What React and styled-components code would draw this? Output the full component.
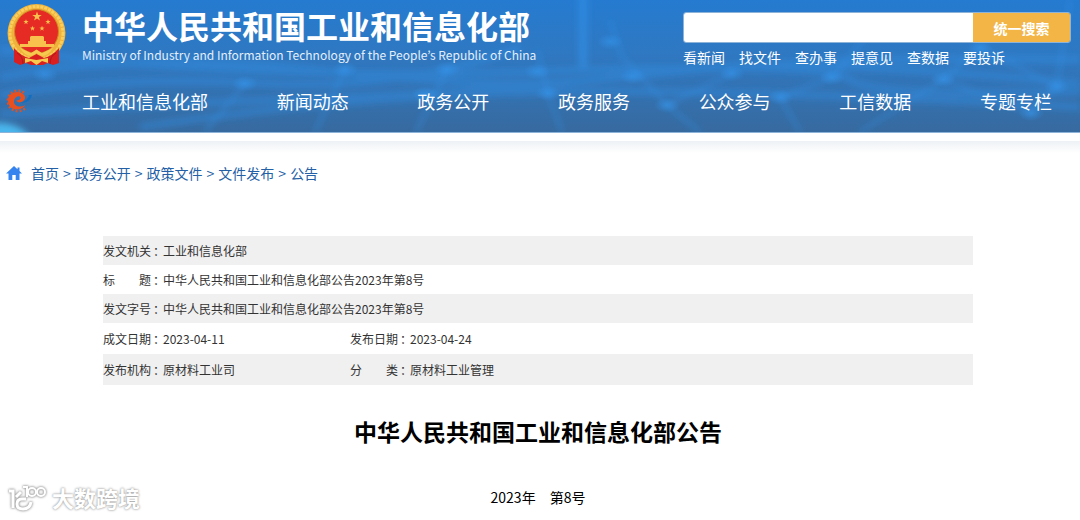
import React from 'react';
import styled, { createGlobalStyle } from 'styled-components';

const GlobalStyle = createGlobalStyle`
  * {
    box-sizing: border-box;
  }

  body {
    margin: 0;
    background: #fff;
    color: #333;
    font-family: 'Noto Sans CJK SC', sans-serif;
  }

  a {
    color: inherit;
    text-decoration: none;
  }
`;

const Page = styled.div`
  position: relative;
  min-height: 100vh;
`;

const Header = styled.header`
  position: relative;
  overflow: hidden;
  color: #fff;
  background: linear-gradient(#257bd0 0%, #2f78c2 40%, #3470ae 75%, #376a9f 100%);
  border-bottom: 1px solid #8db4d8;
`;

const Backdrop = styled.svg`
  position: absolute;
  top: 0;
  left: 0;
  width: 100%;
  height: 100%;
`;

const HeaderTop = styled.div`
  position: relative;
  display: flex;
  justify-content: space-between;
  padding: 4px 9px 0 7px;
`;

const Brand = styled.a`
  display: flex;
  gap: 15px;
`;

const Emblem = styled.svg`
  width: 60px;
  height: 64px;
`;

const BrandText = styled.div`
  display: flex;
  flex-direction: column;
`;

const BrandName = styled.span`
  font-size: 32px;
  line-height: 42px;
  font-weight: 700;
`;

const BrandSub = styled.span`
  font-family: 'Noto Sans CJK KR', sans-serif;
  font-size: 12px;
  line-height: 18px;
  color: #e3effb;
`;

const SearchArea = styled.div`
  width: 388px;
  padding-top: 8px;
`;

const SearchForm = styled.form`
  display: flex;
  height: 31px;
  border: 1px solid #8db4d8;
  border-radius: 3px;
  overflow: hidden;
`;

const SearchInput = styled.input`
  flex: 1;
  min-width: 0;
  border: 0;
  padding: 0 8px;
  background: #fff;
  outline: none;
`;

const SearchButton = styled.button`
  width: 97px;
  border: 0;
  padding: 0;
  background: #f2b546;
  color: #fff;
  font-family: inherit;
  font-size: 14px;
  font-weight: 700;
  cursor: pointer;
`;

const QuickLinks = styled.div`
  display: flex;
  gap: 14px;
  font-size: 14px;
  line-height: 28px;
`;

const Nav = styled.nav`
  position: relative;
  display: flex;
  align-items: center;
  padding: 14px 28px 15px 5px;
`;

const NavLogo = styled.svg`
  width: 28px;
  height: 24px;
  margin-right: 49px;
`;

const NavList = styled.div`
  flex: 1;
  display: flex;
  justify-content: space-between;
  font-size: 18px;
  line-height: 32px;
`;

const HeaderShadow = styled.div`
  height: 12px;
  margin-top: 8px;
  background: linear-gradient(#edf1f5, #fff);
`;

const Breadcrumb = styled.nav`
  display: flex;
  align-items: center;
  gap: 4px;
  padding: 8px 6px;
  font-size: 14px;
  line-height: 24px;
  color: #2360a5;
`;

const HomeIcon = styled.svg`
  width: 16px;
  height: 14px;
  margin-right: 5px;
`;

const Content = styled.main`
  padding: 43px 107px 0 103px;
`;

const InfoTable = styled.table`
  width: 100%;
  table-layout: fixed;
  border-collapse: collapse;
  font-size: 12px;
`;

const InfoRow = styled.tr`
  height: ${({ $tall }) => ($tall ? '31px' : '29px')};
  background: ${({ $shaded }) => ($shaded ? '#f0f0f0' : '#fff')};
`;

const LabelCell = styled.th`
  padding: 0;
  font-weight: 400;
  text-align: left;
  white-space: nowrap;
`;

const ValueCell = styled.td`
  padding: 0;
`;

const Label = styled.span`
  display: flex;
  gap: 2px;
`;

const LabelText = styled.span`
  flex: none;
  display: flex;
  justify-content: space-between;
  width: 48px;
`;

const Title = styled.h1`
  margin: 28px 0 0;
  font-size: 23px;
  line-height: 36px;
  font-weight: 700;
  text-align: center;
  color: #000;
`;

const IssueNo = styled.p`
  margin: 36px 0 0;
  font-size: 14px;
  line-height: 24px;
  text-align: center;
  color: #000;
`;

const Watermark = styled.div`
  position: absolute;
  left: 7px;
  bottom: 6px;
  display: flex;
  align-items: flex-start;
  gap: 3px;
  font-size: 22px;
  line-height: 30px;
  font-weight: 700;
  color: #fff;
  text-shadow: 0 0 2px #999, 0 0 3px #bbb;
`;

const WatermarkLogo = styled.svg`
  width: 42px;
  height: 32px;
  filter: drop-shadow(0 0 1px #999) drop-shadow(0 0 1px #bbb);
`;

const quickLinks = ['看新闻', '找文件', '查办事', '提意见', '查数据', '要投诉'];
const navItems = ['工业和信息化部', '新闻动态', '政务公开', '政务服务', '公众参与', '工信数据', '专题专栏'];
const crumbs = ['首页', '政务公开', '政策文件', '文件发布', '公告'];

const infoRows = [
  { cells: [['发文机关', '工业和信息化部']] },
  { cells: [['标题', '中华人民共和国工业和信息化部公告2023年第8号']] },
  { cells: [['发文字号', '中华人民共和国工业和信息化部公告2023年第8号']] },
  { cells: [['成文日期', '2023-04-11'], ['发布日期', '2023-04-24']], tall: true },
  { cells: [['发布机构', '原材料工业司'], ['分类', '原材料工业管理']], tall: true },
];

const glows = [
  [345, 70], [447, 70], [537, 72], [633, 77], [548, 94], [667, 106], [832, 78],
  [943, 80], [1057, 87], [780, 98], [1031, 114], [425, 95], [732, 74], [245, 84],
  [610, 42], [980, 48], [45, 75],
];

const star = 'M0-5 1.2-1.6 4.8-1.5 1.9.6 2.9 4 0 2-2.9 4-1.9.6-4.8-1.5-1.2-1.6Z';

function HeaderBackdrop() {
  return (
    <Backdrop viewBox="0 0 1080 133" preserveAspectRatio="none" aria-hidden="true">
      <defs>
        <radialGradient id="glow">
          <stop offset="0" stopColor="#369bf4" stopOpacity="0.5" />
          <stop offset="1" stopColor="#369bf4" stopOpacity="0" />
        </radialGradient>
        <filter id="soft" x="-10%" y="-50%" width="120%" height="200%">
          <feGaussianBlur stdDeviation="3" />
        </filter>
      </defs>
      <g fill="none" stroke="#3291e8" filter="url(#soft)">
        <g strokeWidth="7" opacity="0.42">
          <path d="M0 78Q140 50 330 72T640 74T1080 84" />
          <path d="M0 115Q180 104 340 98T660 74T1080 60" />
          <path d="M0 50Q250 82 540 72T850 80T1080 92" />
          <path d="M140 128Q390 90 620 92T1080 108" />
          <path d="M0 96Q120 76 260 84T520 48" />
        </g>
        <g strokeWidth="3" opacity="0.5">
          <path d="M345 70 315 133M447 70 416 133M537 50 548 94 562 133M610 20 622 57 667 106 700 133" />
          <path d="M780 98 832 78 880 20M943 80 860 133M943 80 980 48 1057 87 1031 114M1031 114 943 80M667 106 732 74M780 98 800 133M245 84 205 133M1057 87 1070 0" />
        </g>
        <path d="M583 -10V68" strokeWidth="9" opacity="0.6" />
      </g>
      {glows.map(([x, y]) => (
        <ellipse key={`${x}-${y}`} cx={x} cy={y} rx="13" ry="8" fill="url(#glow)" />
      ))}
      <path d="M-6 124Q18 122 32 140H-6Z" fill="#48b6ed" filter="url(#soft)" />
    </Backdrop>
  );
}

function NationalEmblem() {
  return (
    <Emblem viewBox="0 0 60 64" aria-hidden="true">
      <circle cx="29.500" cy="29" r="29" fill="#efb33c" />
      <circle cx="29.500" cy="29" r="26.500" fill="none" stroke="#fbcf5c" strokeWidth="3" strokeDasharray="3 1" />
      <circle cx="29.500" cy="27.500" r="22" fill="#e62b24" stroke="#cf8a24" strokeWidth="1" />
      <g fill="#f9c04d">
        <path d={star} transform="translate(30 12.500)" />
        <path d={star} transform="translate(19 18) scale(.55)" />
        <path d={star} transform="translate(41 18) scale(.55)" />
        <path d={star} transform="translate(25.500 24.500) scale(.55)" />
        <path d={star} transform="translate(35 24.500) scale(.55)" />
        <path d="M23 33 24 32H36L37 33V37H39V40H21V37H23ZM13 40H47V43H13Z" />
      </g>
      <path d="M7 44Q14 52 22 54L29.500 50 37 54Q45 52 52 44V59L46 61 41 59 36 61H24L19 59 13 61 7 58Z" fill="#d91f1f" />
      <path d="M13 44 24 49 29.500 45.500 35 49 46 44Q41 52 35 52L29.500 49.500 24 52Q18 52 13 44Z" fill="#f7c94f" />
      <path d="M18 54 29.500 56 41 54V59L35 57 29.500 61 24 57 18 59Z" fill="#f7c94f" />
      <path d="M10 49Q16 52 16 60M49 49Q43 52 43 60" fill="none" stroke="#a9191c" strokeWidth="1" />
    </Emblem>
  );
}

function GearLogo() {
  return (
    <NavLogo viewBox="0 0 28 24" aria-hidden="true">
      <path
        d="M19 3.500A10.300 10.300 0 1 0 20 19.500"
        fill="none"
        stroke="#d3542f"
        strokeWidth="2.500"
        strokeDasharray="2 2"
      />
      <path
        d="M20 8C18 .5 2.500 1.500 3 12C3.500 22 16 23 20.500 16C15 19 9 17.500 9 12.500C9 8 14.500 5.500 15.500 8.500C16 10.500 13 11.500 11 11.500C13 15 20.500 13 20 8Z"
        fill="#e9501f"
      />
      <path d="M15 13.500Q21 13 24 7L23 6L27 6L26 9Q22 15 15 13.500Z" fill="#126fc0" />
    </NavLogo>
  );
}

function InfoLabel({ text }) {
  return (
    <Label>
      <LabelText>
        {[...text].map((char, i) => (
          <span key={i}>{char}</span>
        ))}
      </LabelText>
      <span>：</span>
    </Label>
  );
}

function App() {
  return (
    <Page>
      <GlobalStyle />
      <Header>
        <HeaderBackdrop />
        <HeaderTop>
          <Brand href="#">
            <NationalEmblem />
            <BrandText>
              <BrandName>中华人民共和国工业和信息化部</BrandName>
              <BrandSub>Ministry of Industry and Information Technology of the People’s Republic of China</BrandSub>
            </BrandText>
          </Brand>
          <SearchArea>
            <SearchForm onSubmit={(e) => e.preventDefault()}>
              <SearchInput type="text" aria-label="搜索" />
              <SearchButton type="submit">统一搜索</SearchButton>
            </SearchForm>
            <QuickLinks>
              {quickLinks.map((link) => (
                <a key={link} href="#">{link}</a>
              ))}
            </QuickLinks>
          </SearchArea>
        </HeaderTop>
        <Nav>
          <GearLogo />
          <NavList>
            {navItems.map((item) => (
              <a key={item} href="#">{item}</a>
            ))}
          </NavList>
        </Nav>
      </Header>
      <HeaderShadow />

      <Breadcrumb>
        <HomeIcon viewBox="0 0 16 14" aria-hidden="true">
          <path d="M8 0 0 7.500H2.500V14H6.300V9H9.700V14H13.500V7.500H16L13.500 5V1.500H11.500V3.200Z" fill="#3583ee" />
        </HomeIcon>
        {crumbs.map((crumb, i) => (
          <React.Fragment key={crumb}>
            {i > 0 && <span>&gt;</span>}
            <a href="#">{crumb}</a>
          </React.Fragment>
        ))}
      </Breadcrumb>

      <Content>
        <InfoTable>
          <colgroup>
            <col width="60" />
            <col width="187" />
            <col width="60" />
            <col />
          </colgroup>
          <tbody>
            {infoRows.map(({ cells, tall }, i) => (
              <InfoRow key={cells[0][0]} $tall={tall} $shaded={i % 2 === 0}>
                {cells.map(([label, value]) => (
                  <React.Fragment key={label}>
                    <LabelCell scope="row"><InfoLabel text={label} /></LabelCell>
                    <ValueCell colSpan={cells.length === 1 ? 3 : 1}>{value}</ValueCell>
                  </React.Fragment>
                ))}
              </InfoRow>
            ))}
          </tbody>
        </InfoTable>
        <Title>中华人民共和国工业和信息化部公告</Title>
        <IssueNo>2023年　第8号</IssueNo>
      </Content>

      <Watermark>
        <WatermarkLogo viewBox="0 -2 42 32" aria-hidden="true">
          <g fill="none" stroke="#fff" strokeWidth="3">
            <path d="M2 7H6V24M19 15H15Q10 15 10 20T16 25Q23 25 24 18M14 8 9 13" />
            <path d="M16 3H20V13" strokeWidth="2" />
            <circle cx="25" cy="8" r="4" strokeWidth="2" />
            <circle cx="34" cy="8" r="4" strokeWidth="2" />
          </g>
        </WatermarkLogo>
        <span>大数跨境</span>
      </Watermark>
    </Page>
  );
}

export default App;
